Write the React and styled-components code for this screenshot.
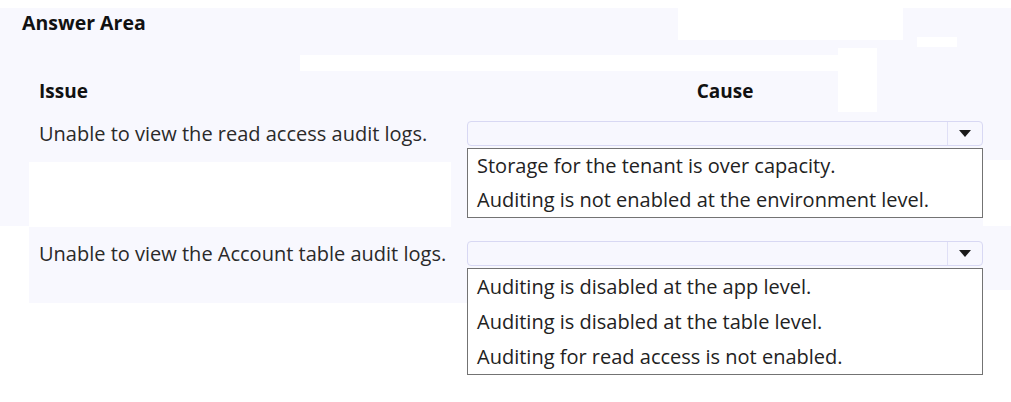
import React from "react";
import styled, { createGlobalStyle } from "styled-components";

const Global = createGlobalStyle`
  html, body { margin: 0; padding: 0; background: #fff; }
  body { font-family: "Open Sans", "Noto Sans", sans-serif; color: #1f1f1f; }
`;

const W = "linear-gradient(#fff,#fff)";

const Page = styled.div`
  width: 1011px;
  height: 402px;
  box-sizing: border-box;
  padding: 11px 0 0 22px;
  overflow: hidden;
  background:
    ${W} 0 0 / 100% 8px no-repeat,
    ${W} 678px 8px / 225px 32px no-repeat,
    ${W} 917px 37px / 40px 10px no-repeat,
    ${W} 300px 55px / 538px 16px no-repeat,
    ${W} 838px 48px / 39px 64px no-repeat,
    ${W} 29px 162px / 422px 65px no-repeat,
    ${W} 0 226px / 29px 176px no-repeat,
    ${W} 0 303px / 100% 99px no-repeat,
    ${W} 983px 160px / 28px 66px no-repeat,
    ${W} 983px 290px / 28px 112px no-repeat,
    #f8f8fe;
`;

const Title = styled.h1`
  margin: 0;
  font-size: 19.5px;
  line-height: 24px;
  font-weight: 700;
  color: #111;
`;

const Table = styled.div`
  margin: 44px 0 0 17px;
  display: grid;
  grid-template-columns: 428px 516px;
`;

const Head = styled.div`
  font-size: 19px;
  line-height: 24px;
  font-weight: 700;
  color: #111;
  text-align: ${(p) => p.$align || "left"};
  margin-bottom: 18px;
`;

const Label = styled.div`
  font-size: 20px;
  line-height: 25px;
  height: 25px;
  color: #2a2a2a;
  white-space: nowrap;
`;

const Cell = styled.div`
  display: flex;
  flex-direction: column;
  gap: 2px;
  margin-bottom: ${(p) => p.$mb || 0}px;
`;

const Select = styled.div`
  height: 25px;
  box-sizing: border-box;
  border: 1px solid #d8d8f3;
  border-radius: 4px;
  background: #f7f7fe;
  display: flex;
  justify-content: flex-end;
`;

const ArrowBox = styled.div`
  width: 34px;
  border-left: 1px solid #e0e0f6;
  display: flex;
  align-items: center;
  justify-content: center;
`;

const Triangle = styled.span`
  width: 0;
  height: 0;
  border-left: 6.5px solid transparent;
  border-right: 6.5px solid transparent;
  border-top: 7px solid #1a1a1a;
`;

const List = styled.div`
  border: 1px solid #737373;
  background: #fff;
  display: flex;
  flex-direction: column;
`;

const Option = styled.div`
  font-size: ${(p) => p.$fs || 20}px;
  line-height: ${(p) => p.$lh}px;
  padding-left: 9px;
  color: #222;
  white-space: nowrap;
`;

const Dropdown = ({ options, lh, mb }) => (
  <Cell $mb={mb}>
    <Select>
      <ArrowBox>
        <Triangle />
      </ArrowBox>
    </Select>
    <List>
      {options.map((o) => (
        <Option key={o} $lh={lh}>
          {o}
        </Option>
      ))}
    </List>
  </Cell>
);

export default function App() {
  return (
    <>
      <Global />
      <Page>
        <Title>Answer Area</Title>
        <Table>
          <Head>Issue</Head>
          <Head $align="center">Cause</Head>
          <Label>Unable to view the read access audit logs.</Label>
          <Dropdown
            lh={34}
            mb={23}
            options={[
              "Storage for the tenant is over capacity.",
              "Auditing is not enabled at the environment level.",
            ]}
          />
          <Label>Unable to view the Account table audit logs.</Label>
          <Dropdown
            lh={35}
            options={[
              "Auditing is disabled at the app level.",
              "Auditing is disabled at the table level.",
              "Auditing for read access is not enabled.",
            ]}
          />
        </Table>
      </Page>
    </>
  );
}
